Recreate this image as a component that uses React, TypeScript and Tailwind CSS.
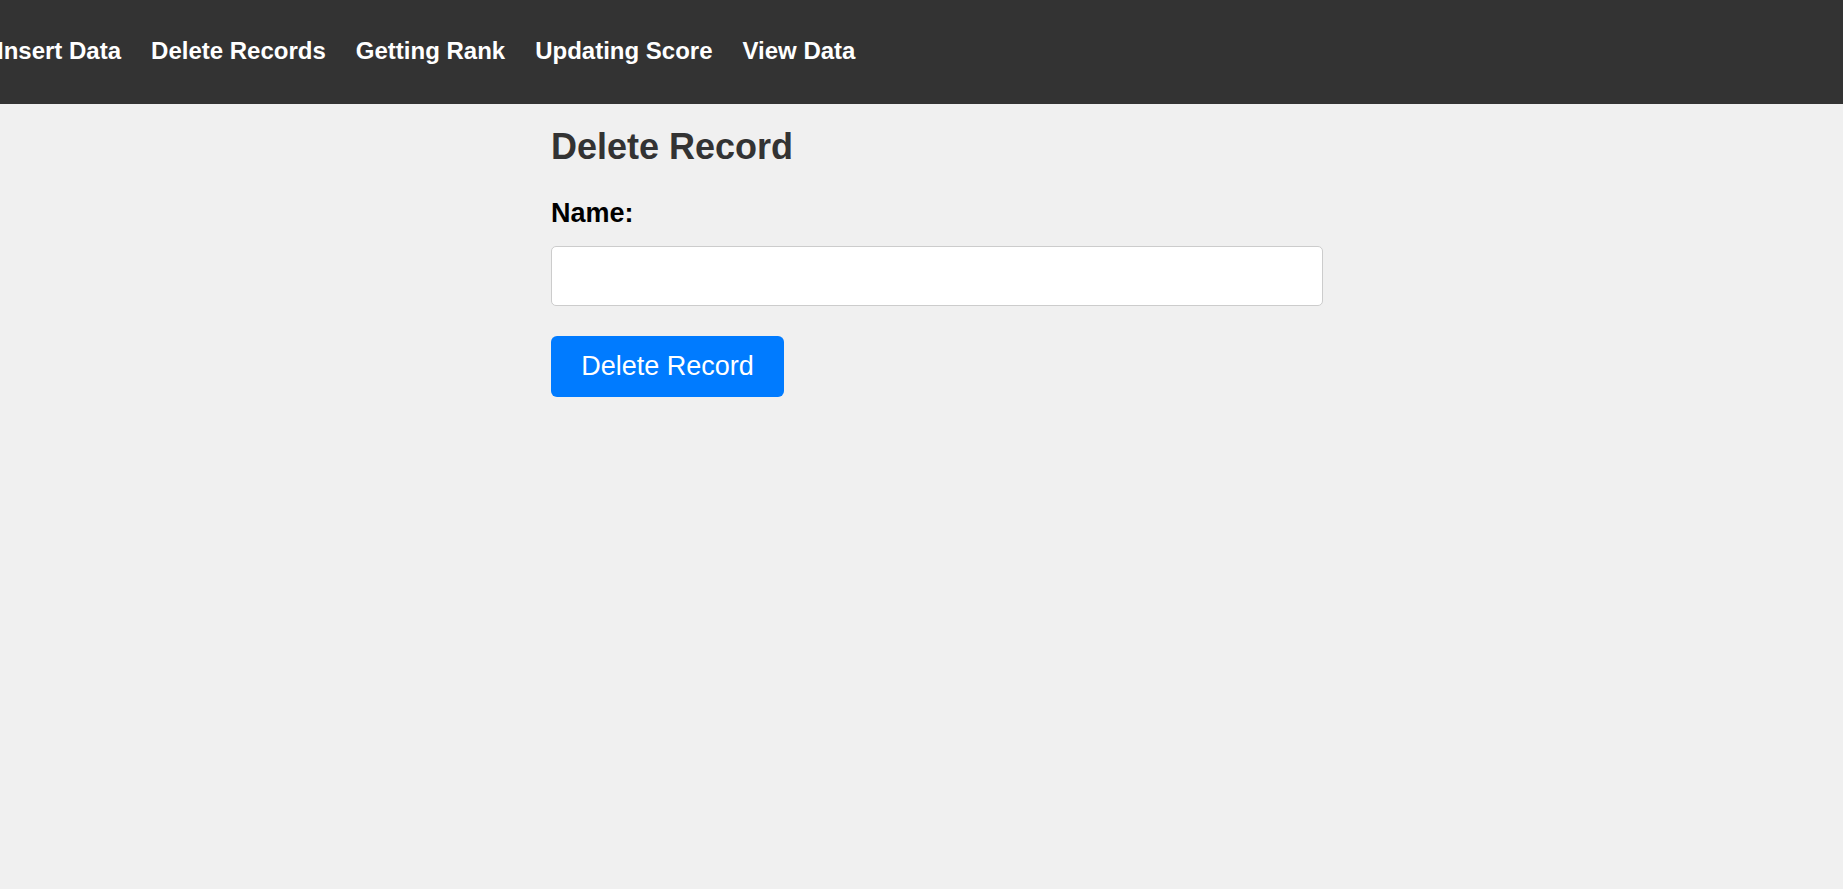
const links = ['Insert Data', 'Delete Records', 'Getting Rank', 'Updating Score', 'View Data'];

export default function App() {
  return (
    <div className="min-h-[889px] bg-[#f0f0f0] font-['Liberation_Sans',Arial,sans-serif]">
      <nav className="flex h-[104px] items-center overflow-hidden bg-[#333333]">
        <ul className="ml-[-3px] flex gap-[30px]">
          {links.map((l) => (
            <li key={l}>
              <a href="#" className="text-[24px] font-bold leading-none text-white">
                {l}
              </a>
            </li>
          ))}
        </ul>
      </nav>

      <main className="ml-[551px] w-[772px] pt-[25px]">
        <h2 className="text-[36px] font-bold leading-none text-[#333333]">Delete Record</h2>
        <form className="mt-[35px] flex flex-col items-start" onSubmit={(e) => e.preventDefault()}>
          <label htmlFor="name" className="text-[27px] font-bold leading-none text-black">
            Name:
          </label>
          <input
            id="name"
            type="text"
            className="mt-[19px] h-[60px] w-full rounded-[5px] border border-[#cccccc] bg-white px-3 text-[24px] outline-none"
          />
          <button
            type="submit"
            className="mt-[30px] h-[61px] w-[233px] rounded-[6px] bg-[#007bff] text-[27px] leading-none text-white"
          >
            Delete Record
          </button>
        </form>
      </main>
    </div>
  );
}
